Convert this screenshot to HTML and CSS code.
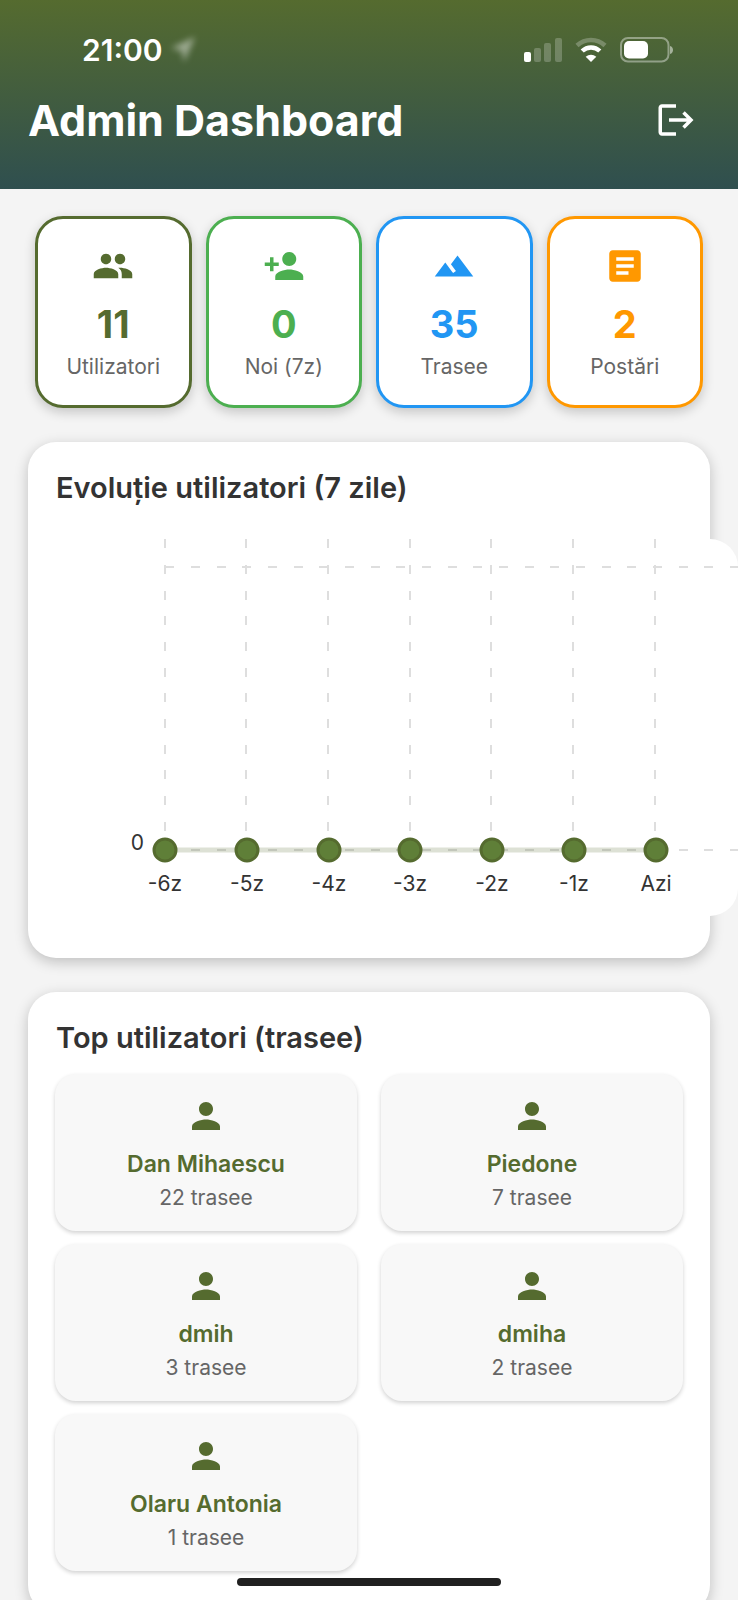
FILE: index.html
```html
<!DOCTYPE html>
<html lang="ro">
<head>
<meta charset="utf-8">
<meta name="viewport" content="width=device-width, initial-scale=1">
<title>Admin Dashboard</title>
<link rel="stylesheet" href="styles.css">
</head>
<body>
<svg class="sprite" aria-hidden="true">
  <symbol id="person" viewBox="0 0 24 24"><path d="M12 12c2.210 0 4-1.790 4-4s-1.790-4-4-4-4 1.790-4 4 1.790 4 4 4zm0 2c-2.670 0-8 1.340-8 4v2h16v-2c0-2.660-5.330-4-8-4z"/></symbol>
</svg>
<header class="header">
  <div class="status">
    <span class="time">21:00</span>
    <svg class="location" width="26" height="26" viewBox="0 0 26 26" aria-hidden="true"><path d="M25 0L1 11l11 3 2 11z"/></svg>
    <svg class="signal" width="38" height="26" viewBox="0 0 38 26" aria-hidden="true">
      <rect x="0" y="15" width="7" height="10" rx="2"/>
      <g opacity=".22"><rect x="10" y="11" width="7" height="14" rx="2"/><rect x="20" y="6" width="7" height="19" rx="2"/><rect x="31" y="1" width="7" height="24" rx="2"/></g>
    </svg>
    <svg class="wifi" width="34" height="26" viewBox="0 0 34 26" aria-hidden="true">
      <path d="M3 8.500C11 1 23 1 31 8.500" fill="none" stroke="#fff" stroke-width="4.500" opacity=".25"/>
      <path d="M8.200 14C13.200 9.200 20.800 9.200 25.800 14" fill="none" stroke="#fff" stroke-width="4.500"/>
      <path d="M17 25l-5.300-5.200c3.200-2.700 7.400-2.700 10.600 0z"/>
    </svg>
    <svg class="battery" width="54" height="26" viewBox="0 0 54 26" aria-hidden="true">
      <rect x="1" y="1" width="47.500" height="23.500" rx="7" fill="none" stroke="#fff" stroke-width="2" opacity=".4"/>
      <rect x="4" y="4" width="24" height="17.500" rx="5"/>
      <path d="M50 9c4 1 4 7 0 8z" opacity=".5"/>
    </svg>
  </div>
  <div class="titlebar">
    <h1 class="title">Admin Dashboard</h1>
    <button class="logout" type="button" aria-label="Deconectare">
      <svg class="icon" viewBox="0 0 24 24" aria-hidden="true"><path d="M17 7l-1.410 1.410L18.170 11H8v2h10.170l-2.580 2.580L17 17l5-5zM4 5h8V3H4c-1.100 0-2 .9-2 2v14c0 1.100.9 2 2 2h8v-2H4V5z"/></svg>
    </button>
  </div>
</header>

<main class="content">
  <section class="stats" aria-label="Statistici">
    <article class="stat stat-users">
      <svg class="icon" viewBox="0 0 24 24" aria-hidden="true"><path d="M16 11c1.660 0 2.990-1.340 2.990-3S17.660 5 16 5s-3 1.340-3 3 1.340 3 3 3zm-8 0c1.660 0 2.990-1.340 2.990-3S9.660 5 8 5 5 6.340 5 8s1.340 3 3 3zm0 2c-2.330 0-7 1.170-7 3.500V19h14v-2.500c0-2.330-4.670-3.500-7-3.500zm8 0c-.29 0-.62.020-.97.050 1.160.84 1.970 1.970 1.970 3.450V19h6v-2.500c0-2.330-4.670-3.500-7-3.500z"/></svg>
      <strong class="value">11</strong><span class="label">Utilizatori</span>
    </article>
    <article class="stat stat-new">
      <svg class="icon" viewBox="0 0 24 24" aria-hidden="true"><path d="M15 12c2.210 0 4-1.790 4-4s-1.790-4-4-4-4 1.790-4 4 1.790 4 4 4zm-9-2V7H4v3H1v2h3v3h2v-3h3v-2H6zm9 4c-2.670 0-8 1.340-8 4v2h16v-2c0-2.660-5.330-4-8-4z"/></svg>
      <strong class="value">0</strong><span class="label">Noi (7z)</span>
    </article>
    <article class="stat stat-routes">
      <svg class="icon" viewBox="0 0 24 24" aria-hidden="true"><path d="M14 6l-3.750 5 2.850 3.800-1.600 1.200C9.810 13.750 7 10 7 10l-6 8h22L14 6z"/></svg>
      <strong class="value">35</strong><span class="label">Trasee</span>
    </article>
    <article class="stat stat-posts">
      <svg class="icon" viewBox="0 0 24 24" aria-hidden="true"><path d="M19 3H5c-1.100 0-2 .9-2 2v14c0 1.100.9 2 2 2h14c1.100 0 2-.9 2-2V5c0-1.100-.9-2-2-2zm-5 14H7v-2h7v2zm3-4H7v-2h10v2zm0-4H7V7h10v2z"/></svg>
      <strong class="value">2</strong><span class="label">Postări</span>
    </article>
  </section>

  <section class="card">
    <h2 class="card-title">Evoluție utilizatori (7 zile)</h2>
    <svg class="chart" viewBox="0 0 682 377" role="img" aria-label="Evoluție utilizatori (7 zile)">
      <rect class="chart-bg" width="682" height="377" rx="28"/>
      <g class="grid-line">
        <path d="M109 28H682M109 311H682"/>
        <path d="M109 0V311M190 0V311M272 0V311M354 0V311M435 0V311M517 0V311M599 0V311"/>
      </g>
      <path class="series" d="M109 311H600"/>
      <g class="dots">
        <circle cx="109" cy="311" r="11"/><circle cx="191" cy="311" r="11"/><circle cx="273" cy="311" r="11"/><circle cx="354" cy="311" r="11"/><circle cx="436" cy="311" r="11"/><circle cx="518" cy="311" r="11"/><circle cx="600" cy="311" r="11"/>
      </g>
      <g class="axis">
        <text class="axis-y" x="88" y="311">0</text>
        <text x="109" y="352">-6z</text><text x="191" y="352">-5z</text><text x="273" y="352">-4z</text><text x="354" y="352">-3z</text><text x="436" y="352">-2z</text><text x="518" y="352">-1z</text><text x="600" y="352">Azi</text>
      </g>
    </svg>
  </section>

  <section class="card">
    <h2 class="card-title">Top utilizatori (trasee)</h2>
    <div class="users">
      <article class="user"><svg class="icon" aria-hidden="true"><use href="#person"/></svg><h3 class="name">Dan Mihaescu</h3><p class="count">22 trasee</p></article>
      <article class="user"><svg class="icon" aria-hidden="true"><use href="#person"/></svg><h3 class="name">Piedone</h3><p class="count">7 trasee</p></article>
      <article class="user"><svg class="icon" aria-hidden="true"><use href="#person"/></svg><h3 class="name">dmih</h3><p class="count">3 trasee</p></article>
      <article class="user"><svg class="icon" aria-hidden="true"><use href="#person"/></svg><h3 class="name">dmiha</h3><p class="count">2 trasee</p></article>
      <article class="user"><svg class="icon" aria-hidden="true"><use href="#person"/></svg><h3 class="name">Olaru Antonia</h3><p class="count">1 trasee</p></article>
    </div>
  </section>
</main>
<div class="home-indicator"></div>
</body>
</html>
```
FILE: styles.css
```css
* {
  box-sizing: border-box;
  margin: 0;
}

body {
  display: flex;
  flex-direction: column;
  height: 100vh;
  overflow: hidden;
  background: #f4f4f4;
  color: #333;
  font-family: Inter, "Liberation Sans", sans-serif;
}

.sprite {
  display: none;
}

.icon {
  display: block;
  width: 42px;
  height: 42px;
  fill: currentColor;
}

.header {
  flex: none;
  padding-bottom: 34px;
  background: linear-gradient(#556b2f, #2f4f4f);
  color: #fff;
}

.status {
  display: flex;
  align-items: center;
  height: 85px;
  padding: 15px 64px 0 82px;
  fill: #fff;
}

.time {
  font-size: 30px;
  font-weight: 600;
  line-height: 36px;
}

.location {
  margin: 0 auto 0 7px;
  opacity: .45;
  filter: blur(3px);
}

.wifi {
  margin: 0 12px;
}

.titlebar {
  display: flex;
  align-items: center;
  justify-content: space-between;
  padding: 0 27px 0 28px;
}

.title {
  font-size: 43px;
  font-weight: 700;
  line-height: 52px;
}

.logout {
  padding: 14px;
  border: 0;
  background: none;
  color: inherit;
  cursor: pointer;
}

.content {
  flex: 1;
  min-height: 0;
  padding: 27px 28px;
  overflow: hidden auto;
  scrollbar-width: none;
}

.stats {
  display: grid;
  grid-template-columns: repeat(4, 1fr);
  gap: 14px;
  padding: 0 7px;
}

.stat {
  display: flex;
  flex-direction: column;
  align-items: center;
  padding: 26px 7px;
  border: 3px solid;
  border-radius: 28px;
  background: #fff;
  box-shadow: 0 4px 12px rgba(0, 0, 0, .2);
}

.stat-users {
  border-color: #556b2f;
  color: #556b2f;
}

.stat-new {
  border-color: #4caf50;
  color: #4caf50;
}

.stat-routes {
  border-color: #2196f3;
  color: #2196f3;
}

.stat-posts {
  border-color: #ff9800;
  color: #ff9800;
}

.value {
  margin: 14px 0 7px;
  font-size: 38px;
  font-weight: 700;
  line-height: 46px;
}

.label {
  color: #666;
  font-size: 21px;
  line-height: 25px;
}

.card {
  margin-top: 34px;
  padding: 28px 28px 42px;
  border-radius: 28px;
  background: #fff;
  box-shadow: 0 4px 14px rgba(0, 0, 0, .22);
}

.card-title {
  font-size: 29px;
  font-weight: 600;
  line-height: 36px;
}

.chart {
  display: block;
  width: calc(100% + 56px);
  margin-top: 33px;
}

.chart-bg {
  fill: #fff;
}

.grid-line {
  fill: none;
  stroke: #dedede;
  stroke-width: 2;
  stroke-dasharray: 9 17 9 17 9 16;
}

.series {
  fill: none;
  stroke: #556b2f;
  stroke-opacity: .2;
  stroke-width: 5;
}

.dots {
  fill: #5f7f38;
  stroke: #556b2f;
  stroke-width: 3;
}

.axis {
  fill: #333;
  font-size: 21px;
  text-anchor: middle;
}

.axis-y {
  text-anchor: end;
}

.users {
  display: grid;
  grid-template-columns: repeat(2, 1fr);
  gap: 13px 24px;
  margin: 18px -1px 0;
}

.user {
  display: flex;
  flex-direction: column;
  align-items: center;
  padding: 21px 21px 20px;
  border-radius: 21px;
  background: #f8f8f8;
  box-shadow: 0 2px 4px rgba(0, 0, 0, .18);
  color: #556b2f;
}

.name {
  margin: 13px 0 6px;
  font-size: 23px;
  font-weight: 600;
  line-height: 28px;
}

.count {
  color: #666;
  font-size: 21px;
  line-height: 27px;
}

.home-indicator {
  position: fixed;
  bottom: 14px;
  left: 50%;
  width: 264px;
  height: 8px;
  border-radius: 4px;
  background: #202020;
  transform: translateX(-50%);
}
```
